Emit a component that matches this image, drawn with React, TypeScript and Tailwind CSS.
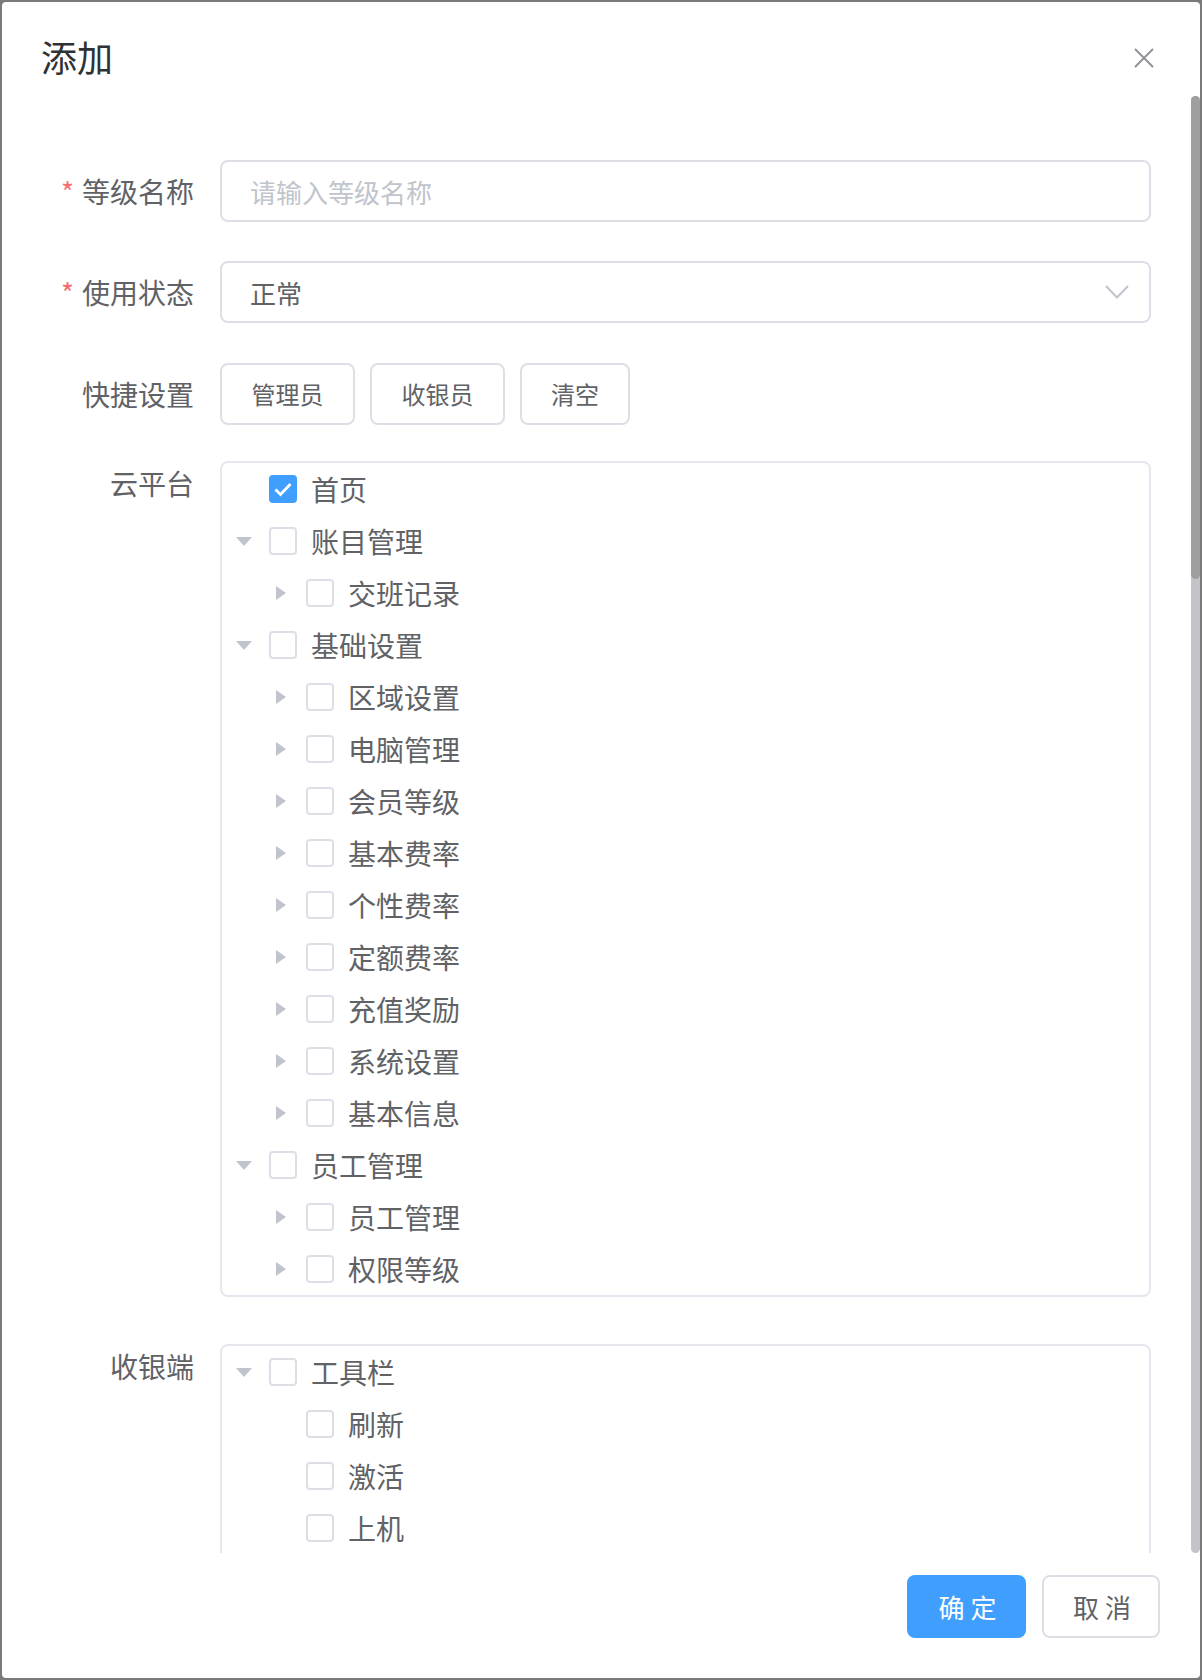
import React from "react";

type Node = {
  label: string;
  level: number;
  caret?: "down" | "right";
  checked?: boolean;
};

const cloudTree: Node[] = [
  { label: "首页", level: 0, checked: true },
  { label: "账目管理", level: 0, caret: "down" },
  { label: "交班记录", level: 1, caret: "right" },
  { label: "基础设置", level: 0, caret: "down" },
  { label: "区域设置", level: 1, caret: "right" },
  { label: "电脑管理", level: 1, caret: "right" },
  { label: "会员等级", level: 1, caret: "right" },
  { label: "基本费率", level: 1, caret: "right" },
  { label: "个性费率", level: 1, caret: "right" },
  { label: "定额费率", level: 1, caret: "right" },
  { label: "充值奖励", level: 1, caret: "right" },
  { label: "系统设置", level: 1, caret: "right" },
  { label: "基本信息", level: 1, caret: "right" },
  { label: "员工管理", level: 0, caret: "down" },
  { label: "员工管理", level: 1, caret: "right" },
  { label: "权限等级", level: 1, caret: "right" },
];

const cashierTree: Node[] = [
  { label: "工具栏", level: 0, caret: "down" },
  { label: "刷新", level: 1 },
  { label: "激活", level: 1 },
  { label: "上机", level: 1 },
];

function Caret({ dir }: { dir?: "down" | "right" }) {
  return (
    <span className="ml-[4px] mr-[7px] flex h-[36px] w-[36px] items-center justify-center">
      {dir === "down" && (
        <svg width="16" height="9" viewBox="0 0 16 9">
          <path d="M0 0 L16 0 L8 9 Z" fill="#C0C4CC" />
        </svg>
      )}
      {dir === "right" && (
        <svg width="10" height="14" viewBox="0 0 10 14">
          <path d="M0 0 L10 7 L0 14 Z" fill="#C0C4CC" />
        </svg>
      )}
    </span>
  );
}

function Checkbox({ checked }: { checked?: boolean }) {
  if (checked) {
    return (
      <span className="flex h-[28px] w-[28px] items-center justify-center rounded-[4px] bg-[#409EFF]">
        <svg width="28" height="28" viewBox="0 0 28 28">
          <path
            d="M6.5 14.5 L11.5 19.5 L21.5 9"
            fill="none"
            stroke="#fff"
            strokeWidth="2.8"
          />
        </svg>
      </span>
    );
  }
  return <span className="h-[28px] w-[28px] rounded-[4px] border-2 border-[#DCDFE6] bg-white" />;
}

function TreeRow({ node }: { node: Node }) {
  return (
    <div
      className="flex h-[52px] items-center"
      style={{ paddingLeft: node.level * 37 }}
    >
      <Caret dir={node.caret} />
      <Checkbox checked={node.checked} />
      <span className="ml-[14px] text-[28px] leading-none text-[#606266]">{node.label}</span>
    </div>
  );
}

function Label({ children, required, tall }: { children: React.ReactNode; required?: boolean; tall?: boolean }) {
  return (
    <div
      className={
        "w-[218px] shrink-0 pr-[26px] text-right text-[28px] text-[#606266] " +
        (tall ? "leading-[62px]" : "leading-[44px]")
      }
    >
      {required && <span className="mr-[8px] text-[#F56C6C]">*</span>}
      {children}
    </div>
  );
}

export default function App() {
  return (
    <div className="h-[1680px] w-[1202px] bg-[#7a7a7a] p-[2px] font-['Noto_Sans_CJK_SC','Liberation_Sans',sans-serif]">
      <div className="flex h-full flex-col overflow-hidden rounded-[4px] bg-white">
        {/* header */}
        <div className="relative h-[94px] shrink-0 pl-[39px] pt-[32px]">
          <h2 className="text-[36px] leading-[44px] text-[#303133]">添加</h2>
          <button className="absolute right-[46px] top-[46px] flex h-[20px] w-[20px] items-center justify-center">
            <svg width="20" height="20" viewBox="0 0 20 20">
              <path d="M1 1 L19 19 M19 1 L1 19" stroke="#909399" strokeWidth="2" />
            </svg>
          </button>
        </div>

        {/* body */}
        <div className="relative h-[1457px] shrink-0 overflow-hidden">
          <div className="pr-[49px] pt-[64px]">
            <div className="mb-[39px] flex">
              <Label required tall>
                等级名称
              </Label>
              <div className="flex h-[62px] flex-1 items-center rounded-[8px] border-2 border-[#DCDFE6] pl-[28px] text-[26px] text-[#C0C4CC]">
                请输入等级名称
              </div>
            </div>

            <div className="mb-[40px] flex">
              <Label required tall>
                使用状态
              </Label>
              <div className="flex h-[62px] flex-1 items-center justify-between rounded-[8px] border-2 border-[#DCDFE6] pl-[28px] pr-[20px] text-[26px] text-[#606266]">
                <span>正常</span>
                <svg width="24" height="14" viewBox="0 0 24 14">
                  <path d="M1 1 L12 12.5 L23 1" fill="none" stroke="#C0C4CC" strokeWidth="2" />
                </svg>
              </div>
            </div>

            <div className="mb-[36px] flex">
              <Label tall>快捷设置</Label>
              <div className="flex gap-[15px]">
                <button className="h-[62px] w-[135px] rounded-[8px] border-2 border-[#DCDFE6] bg-white text-[24px] text-[#606266]">
                  管理员
                </button>
                <button className="h-[62px] w-[135px] rounded-[8px] border-2 border-[#DCDFE6] bg-white text-[24px] text-[#606266]">
                  收银员
                </button>
                <button className="h-[62px] w-[110px] rounded-[8px] border-2 border-[#DCDFE6] bg-white text-[24px] text-[#606266]">
                  清空
                </button>
              </div>
            </div>

            <div className="mb-[47px] flex">
              <Label>云平台</Label>
              <div className="flex-1 rounded-[8px] border-2 border-[#E4E7ED]">
                {cloudTree.map((n, i) => (
                  <TreeRow key={i} node={n} />
                ))}
              </div>
            </div>

            <div className="flex">
              <Label>收银端</Label>
              <div className="h-[240px] flex-1 rounded-[8px] border-2 border-[#E4E7ED]">
                {cashierTree.map((n, i) => (
                  <TreeRow key={i} node={n} />
                ))}
              </div>
            </div>
          </div>

          {/* scrollbar */}
          <div className="absolute right-0 top-0 h-full w-[9px] rounded-full bg-[#C2C4C8]">
            <div className="h-[483px] w-full rounded-full bg-[#9F9F9F]" />
          </div>
        </div>

        {/* footer */}
        <div className="flex justify-end gap-[16px] pr-[40px] pt-[22px]">
          <button className="h-[63px] w-[119px] rounded-[8px] bg-[#409EFF] pl-[8px] text-[26px] tracking-[6px] text-white">
            确定
          </button>
          <button className="h-[63px] w-[118px] rounded-[8px] border-2 border-[#DCDFE6] bg-white pl-[8px] text-[26px] tracking-[6px] text-[#606266]">
            取消
          </button>
        </div>
      </div>
    </div>
  );
}
